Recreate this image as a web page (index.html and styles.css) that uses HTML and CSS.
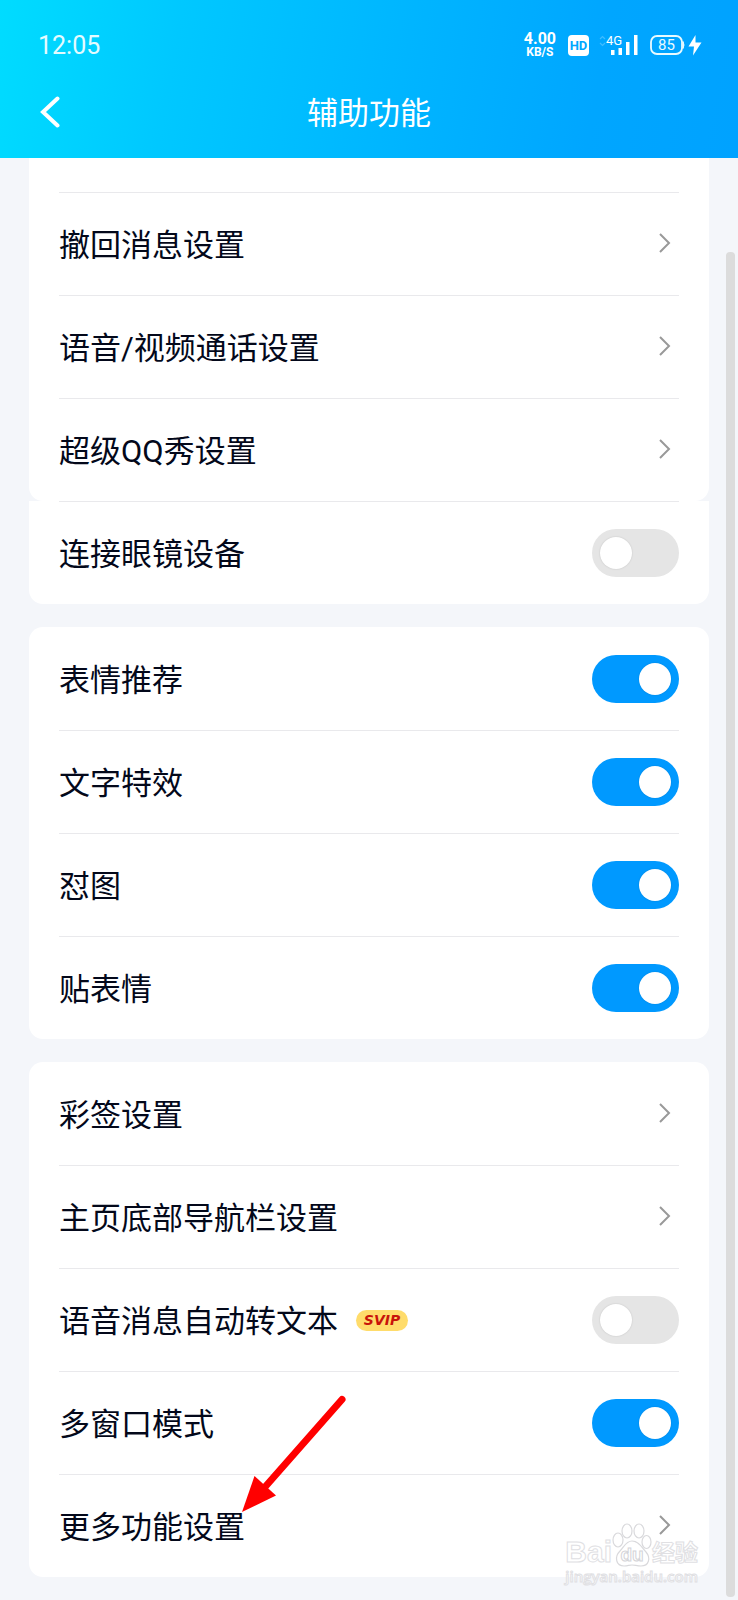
FILE: index.html
```html
<!doctype html>
<html lang="zh-CN">
  <head>
    <meta charset="UTF-8" />
    <meta name="viewport" content="width=device-width, initial-scale=1.0" />
    <title>辅助功能</title>
    <link rel="stylesheet" href="styles.css">
  </head>
  <body>
    <header class="header">
      <div class="status-bar">
        <span class="time">12:05</span>
        <div class="status-icons">
          <div class="speed">
            <span class="speed-value">4.00</span>
            <span class="speed-unit">KB/S</span>
          </div>
          <span class="hd">HD</span>
          <svg class="signal" width="40" height="22" viewBox="0 0 40 22">
            <path d="M1 5l2.500-2.500L6 5M1 9l2.500 2.500L6 9" fill="none" stroke="#fff" stroke-opacity=".25" stroke-width="1.200" />
            <text x="7" y="11" class="signal-text">4G</text>
            <path d="M12 16h3.500v5h-3.500zM19.500 14h3.500v7h-3.500zM27 8h3.500v13h-3.500zM35 1h3.500v20h-3.500z" fill="#fff" />
          </svg>
          <svg class="battery" width="52" height="22" viewBox="0 0 52 22">
            <rect x="1" y="2" width="31" height="18" rx="6" fill="none" stroke="#e8faff" stroke-width="1.800" />
            <path d="M33 7.500q2 3.500 0 7z" fill="#e8faff" stroke="#e8faff" />
            <text x="16.500" y="16" text-anchor="middle" class="battery-text">85</text>
            <path d="M45.500 1L38.500 12.500h5.500l-1 9L51.500 8.500h-6z" fill="#fff" />
          </svg>
        </div>
      </div>
      <div class="title-bar">
        <button class="back" type="button" aria-label="返回">
          <svg width="20" height="32" viewBox="0 0 20 32">
            <path d="M17.500 2.500L3 16l14.500 13.500" fill="none" stroke="#fff" stroke-width="4" stroke-linecap="round" />
          </svg>
        </button>
        <h1>辅助功能</h1>
      </div>
    </header>

    <main class="content">
      <section class="card card-scrolled">
        <a class="row" href="#recall"><span class="name">撤回消息设置</span><svg class="chevron" viewBox="0 0 12 20"><path d="M1 1l9 9-9 9" /></svg></a>
        <a class="row" href="#call"><span class="name">语音/视频通话设置</span><svg class="chevron" viewBox="0 0 12 20"><path d="M1 1l9 9-9 9" /></svg></a>
        <a class="row" href="#qqshow"><span class="name">超级QQ秀设置</span><svg class="chevron" viewBox="0 0 12 20"><path d="M1 1l9 9-9 9" /></svg></a>
      </section>
      <section class="card card-joined">
        <label class="row"><span class="name">连接眼镜设备</span><input class="switch" type="checkbox"></label>
      </section>

      <section class="card">
        <label class="row"><span class="name">表情推荐</span><input class="switch" type="checkbox" checked></label>
        <label class="row"><span class="name">文字特效</span><input class="switch" type="checkbox" checked></label>
        <label class="row"><span class="name">怼图</span><input class="switch" type="checkbox" checked></label>
        <label class="row"><span class="name">贴表情</span><input class="switch" type="checkbox" checked></label>
      </section>

      <section class="card">
        <a class="row" href="#signature"><span class="name">彩签设置</span><svg class="chevron" viewBox="0 0 12 20"><path d="M1 1l9 9-9 9" /></svg></a>
        <a class="row" href="#navbar"><span class="name">主页底部导航栏设置</span><svg class="chevron" viewBox="0 0 12 20"><path d="M1 1l9 9-9 9" /></svg></a>
        <label class="row"><span class="name">语音消息自动转文本</span><span class="svip">SVIP</span><input class="switch" type="checkbox"></label>
        <label class="row"><span class="name">多窗口模式</span><input class="switch" type="checkbox" checked></label>
        <a class="row" href="#more">
          <span class="name">更多功能设置</span><svg class="chevron" viewBox="0 0 12 20"><path d="M1 1l9 9-9 9" /></svg>
          <svg class="arrow" width="106" height="118" viewBox="0 0 106 118">
            <path d="M101 4.500L24 92" stroke="#f00" stroke-width="7" stroke-linecap="round" />
            <path d="M1 117L13.500 81 35 100.500z" fill="#f00" />
          </svg>
        </a>
      </section>
    </main>

    <div class="scrollbar"></div>

    <div class="watermark">
      <div class="wm-brand">
        <span class="wm-bai">Bai</span>
        <svg width="40" height="44" viewBox="0 0 40 44">
          <g fill="#fff" stroke="#d9d9dc" stroke-width="1.200">
            <ellipse cx="6" cy="17" rx="5" ry="7" />
            <ellipse cx="15" cy="8" rx="5" ry="7" />
            <ellipse cx="27" cy="8" rx="5" ry="7" />
            <ellipse cx="34.500" cy="19" rx="4.500" ry="6.500" />
            <path d="M20 18c-6 0-8 6-12 10-6 6-4 15 4 15 4 0 5-1 8-1s5 1 9 1c8 0 10-8 5-14-4-4-7-11-14-11z" />
          </g>
          <text x="20" y="38" text-anchor="middle" class="wm-du">du</text>
        </svg>
        <span class="wm-cn">经验</span>
      </div>
      <span class="wm-url">jingyan.baidu.com</span>
    </div>
  </body>
</html>
```
FILE: styles.css
```css
* {
  margin: 0;
  padding: 0;
  box-sizing: border-box;
}

body {
  position: relative;
  font-family: Roboto, "Noto Sans CJK SC", sans-serif;
  background: #f4f6fa;
  color: #03081a;
  min-height: 100vh;
}

/* header */
.header {
  background: linear-gradient(100deg, #00dcff 0%, #00c8ff 24%, #00b4ff 56%, #00a6ff 80%, #00a2ff 100%);
  color: #fff;
  padding-bottom: 22px;
}

.status-bar {
  display: flex;
  align-items: center;
  justify-content: space-between;
  height: 90px;
  padding: 0 36px 0 38px;
}

.time {
  padding-top: 2px;
  font-size: 25px;
  line-height: 30px;
  color: #e4fbff;
}

.status-icons {
  display: flex;
  align-items: center;
}

.speed {
  display: flex;
  flex-direction: column;
  align-items: center;
  font-weight: 700;
  margin-right: 12px;
}

.speed-value {
  font-size: 16px;
  line-height: 14px;
}

.speed-unit {
  font-size: 12px;
  line-height: 12px;
}

.hd {
  width: 21px;
  height: 21px;
  margin-right: 10px;
  border-radius: 4px;
  background: #fff;
  color: #00a8ff;
  font-size: 13px;
  font-weight: 700;
  line-height: 21px;
  text-align: center;
}

.signal {
  margin-right: 11px;
}

.signal-text {
  fill: #fff;
  font-size: 13px;
}

.battery-text {
  fill: #e8faff;
  font-size: 15px;
}

.title-bar {
  display: grid;
  grid-template-columns: 60px 1fr 60px;
  align-items: center;
  height: 46px;
}

.back {
  display: flex;
  justify-content: flex-end;
  padding-bottom: 2px;
  border: none;
  background: none;
  cursor: pointer;
}

h1 {
  padding-top: 2px;
  font-size: 31px;
  font-weight: 400;
  line-height: 44px;
  text-align: center;
}

/* settings list */
.content {
  padding: 0 29px 23px;
}

.card {
  background: #fff;
  border-radius: 14px;
  padding: 0 30px;
  margin-bottom: 23px;
}

.card:last-child {
  margin-bottom: 0;
}

.card-scrolled {
  border-radius: 0 0 14px 14px;
  padding-top: 34px;
  margin-bottom: 0;
}

.card-joined {
  border-radius: 0 0 14px 14px;
}

.row {
  position: relative;
  display: flex;
  align-items: center;
  height: 103px;
  border-top: 1px solid #e9e9ec;
  color: inherit;
  font-size: 31px;
  line-height: 46px;
  text-decoration: none;
}

.card:not(.card-scrolled):not(.card-joined) .row:first-child {
  border-top-color: transparent;
}

.name {
  padding-top: 4px;
}

.chevron {
  width: 12px;
  height: 20px;
  margin: 0 8px 2px auto;
  fill: none;
  stroke: #999;
  stroke-width: 2;
  overflow: visible;
}

.switch {
  appearance: none;
  display: flex;
  align-items: center;
  width: 87px;
  height: 48px;
  margin-left: auto;
  padding: 0 8px;
  border-radius: 24px;
  background: #e5e5e5;
  cursor: pointer;
}

.switch::before {
  content: "";
  width: 32px;
  height: 32px;
  border-radius: 50%;
  background: #fff;
  box-shadow: 0 0 2px rgba(0, 0, 0, 0.15);
}

.switch:checked {
  justify-content: flex-end;
  background: #0099ff;
}

.svip {
  width: 52px;
  height: 21px;
  margin-left: 18px;
  border-radius: 11px;
  background: #ffdc6b;
  color: #c8140a;
  font-family: "DejaVu Sans", sans-serif;
  font-size: 14px;
  font-weight: 700;
  font-style: italic;
  line-height: 21px;
  text-align: center;
}

/* overlays */
.arrow {
  position: absolute;
  left: 182px;
  bottom: 64px;
}

.scrollbar {
  position: absolute;
  top: 252px;
  right: 3px;
  bottom: 3px;
  width: 9px;
  border-radius: 4px;
  background: #dcdcdc;
}

.watermark {
  position: absolute;
  right: 40px;
  bottom: 15px;
  display: flex;
  flex-direction: column;
  align-items: center;
  color: #fff;
  -webkit-text-stroke: 1px #e0e0e3;
}

.wm-brand {
  display: flex;
  align-items: flex-end;
  height: 44px;
}

.wm-bai {
  font-family: "Liberation Sans", sans-serif;
  font-size: 30px;
  font-weight: 700;
  line-height: 30px;
}

.wm-du {
  fill: #fff;
  stroke: #d4d4d8;
  stroke-width: 1px;
  font-family: "Liberation Sans", sans-serif;
  font-size: 19px;
  font-weight: 700;
}

.wm-cn {
  font-size: 23px;
  font-weight: 700;
  line-height: 26px;
}

.wm-url {
  font-family: "Open Sans", sans-serif;
  font-size: 15px;
  font-weight: 600;
  line-height: 18px;
}
```
